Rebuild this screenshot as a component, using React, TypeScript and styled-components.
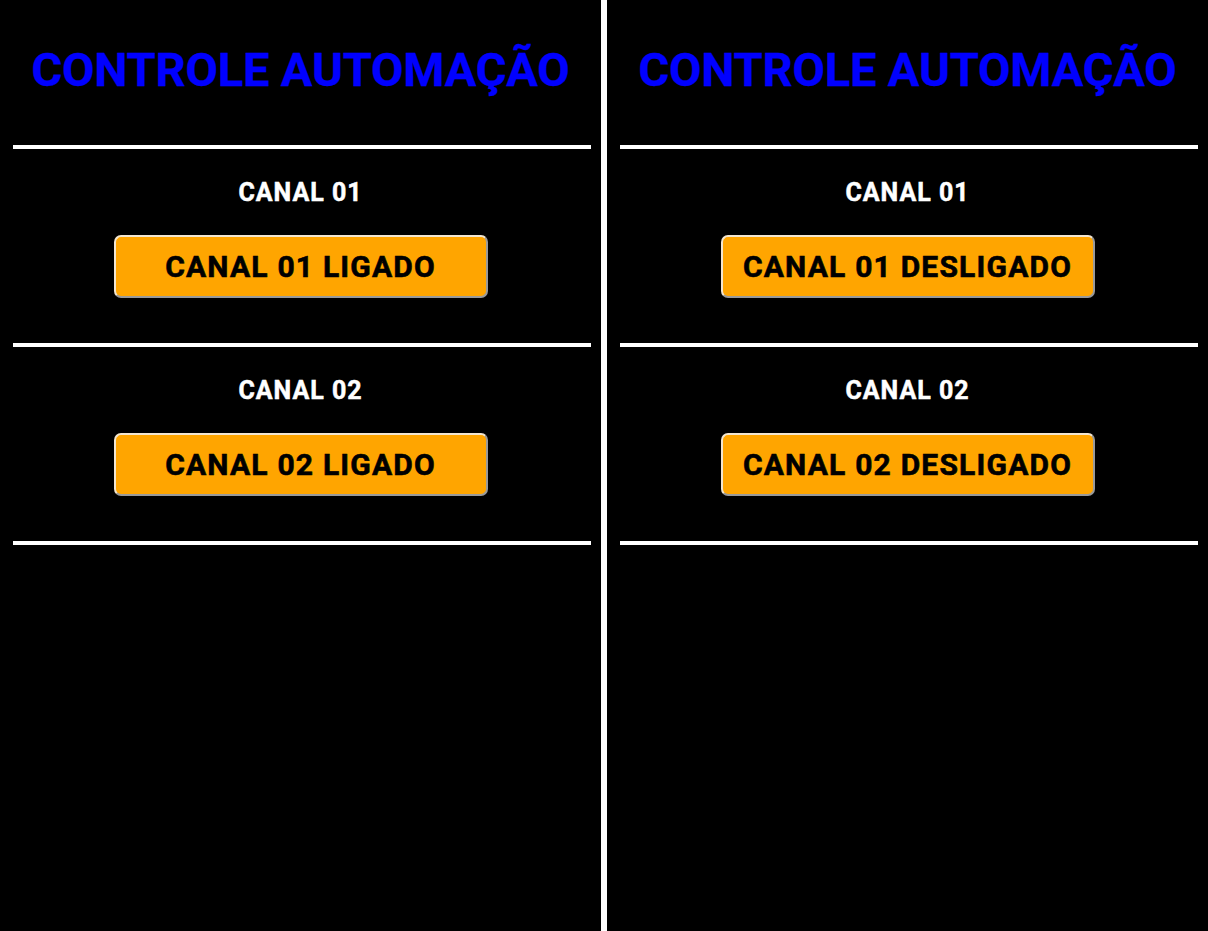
import React from "react";
import styled, { createGlobalStyle } from "styled-components";

const Global = createGlobalStyle`
  html, body { margin: 0; padding: 0; background: #000; }
  body { font-family: Roboto, "Liberation Sans", sans-serif; }
`;

const Page = styled.div`
  display: flex;
  width: 1208px;
  height: 931px;
  background: #000;
  overflow: hidden;
`;

const Panel = styled.div`
  width: 601px;
  flex: none;
  display: flex;
  flex-direction: column;
`;

const Divider = styled.div`
  width: 6px;
  flex: none;
  background: #fff;
`;

const Title = styled.h1`
  margin: 0;
  height: 145px;
  padding-top: 42px;
  box-sizing: border-box;
  text-align: center;
  font-size: 47px;
  line-height: 56px;
  font-weight: 700;
  color: #0000ff;
  letter-spacing: -0.15px;
  -webkit-text-stroke: 0.3px #0000ff;
`;

const Rule = styled.div`
  height: 4px;
  margin: 0 10px 0 13px;
  background: #fff;
`;

const Section = styled.section`
  height: 194px;
  display: flex;
  flex-direction: column;
  align-items: center;
  padding-top: 30px;
  box-sizing: border-box;
`;

const Label = styled.div`
  font-size: 25px;
  line-height: 28px;
  font-weight: 700;
  color: #fff;
  letter-spacing: 1px;
  -webkit-text-stroke: 0.5px #fff;
  margin-bottom: 28px;
`;

const Button = styled.button`
  width: 374px;
  height: 63px;
  box-sizing: border-box;
  background: #ffa500;
  border: 2px solid;
  border-color: #f3e6d0 #9a9a9a #9a9a9a #f3e6d0;
  border-radius: 7px;
  font-family: Roboto, "Liberation Sans", sans-serif;
  font-size: 30px;
  font-weight: 700;
  letter-spacing: 1.2px;
  -webkit-text-stroke: 0.6px #000;
  color: #000;
  padding: 0;
  cursor: pointer;
`;

const channels = ["01", "02"];

function ControlPanel({ state }: { state: string }) {
  return (
    <Panel>
      <Title>CONTROLE AUTOMAÇÃO</Title>
      <Rule />
      {channels.map((c) => (
        <React.Fragment key={c}>
          <Section>
            <Label>CANAL {c}</Label>
            <Button>
              CANAL {c} {state}
            </Button>
          </Section>
          <Rule />
        </React.Fragment>
      ))}
    </Panel>
  );
}

export default function App() {
  return (
    <Page>
      <Global />
      <ControlPanel state="LIGADO" />
      <Divider />
      <ControlPanel state="DESLIGADO" />
    </Page>
  );
}
